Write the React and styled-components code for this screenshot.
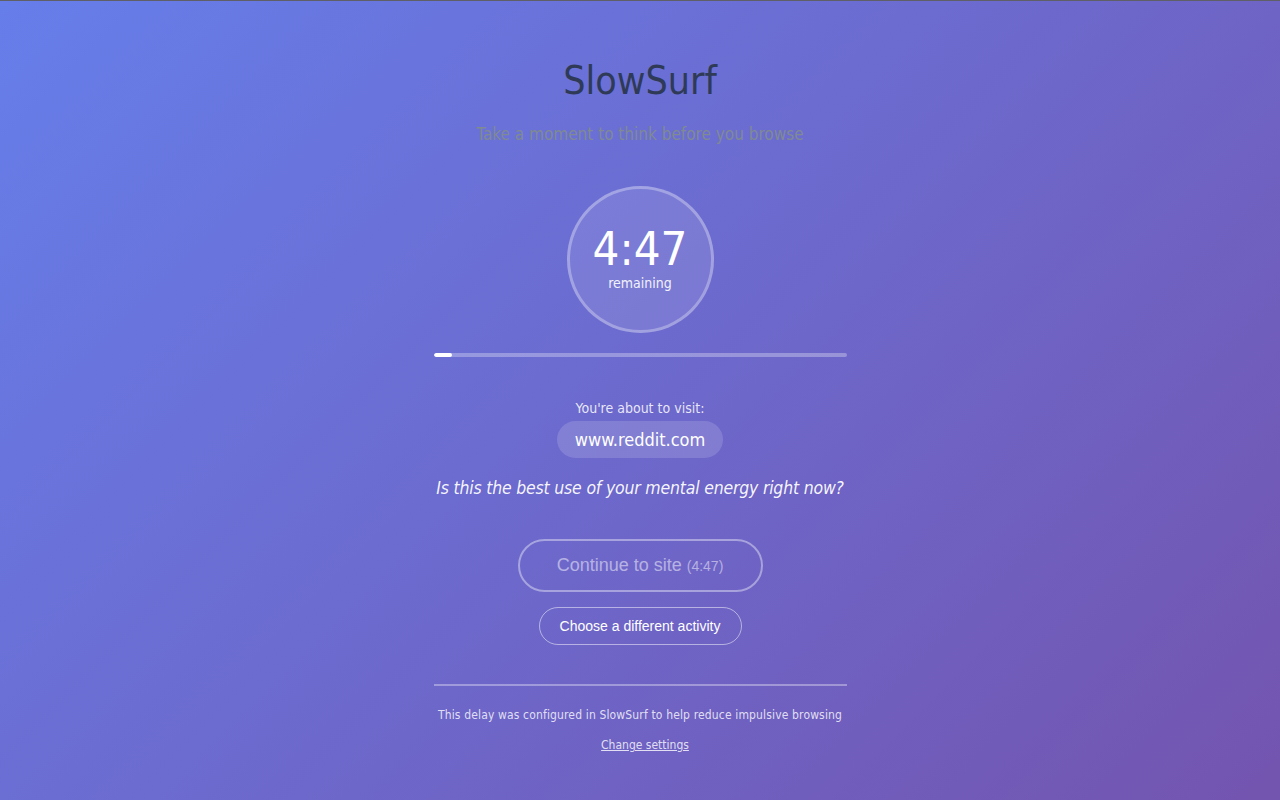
import React from 'react';
import styled, { createGlobalStyle } from 'styled-components';

const GlobalStyle = createGlobalStyle`
  html, body {
    margin: 0;
    padding: 0;
    height: 100%;
  }
  body {
    font-family: "DejaVu Sans Condensed", "DejaVu Sans", sans-serif;
  }
`;

const Page = styled.div`
  min-height: 800px;
  box-sizing: border-box;
  border-top: 1px solid #5f5f68;
  background: linear-gradient(135deg, #667eea 0%, #764ba2 122%);
  display: flex;
  justify-content: center;
`;

const Container = styled.div`
  width: 413px;
  display: flex;
  flex-direction: column;
  align-items: center;
  padding-top: 56px;
`;

const Title = styled.h1`
  margin: 0;
  font-size: 39px;
  font-weight: normal;
  color: #2e3a56;
  line-height: 48px;
`;

const Subtitle = styled.p`
  margin: 19px 0 0;
  font-size: 17px;
  color: #7f8a93;
  line-height: 20px;
`;

const Circle = styled.div`
  margin-top: 42px;
  width: 141px;
  height: 141px;
  border-radius: 50%;
  border: 3px solid rgba(255, 255, 255, 0.3);
  background: rgba(255, 255, 255, 0.1);
  display: flex;
  flex-direction: column;
  align-items: center;
  justify-content: center;
  color: #fff;
`;

const Time = styled.div`
  font-size: 47px;
  line-height: 50px;
`;

const Remaining = styled.div`
  font-size: 14px;
  line-height: 16px;
  margin-top: 1px;
  margin-bottom: 4px;
  opacity: 0.9;
`;

const Track = styled.div`
  margin-top: 20px;
  width: 100%;
  height: 4px;
  border-radius: 2px;
  background: rgba(255, 255, 255, 0.3);
  overflow: hidden;
`;

const Fill = styled.div`
  height: 100%;
  background: #fff;
  border-radius: 2px;
`;

const VisitLabel = styled.p`
  margin: 42px 0 0;
  font-size: 14px;
  line-height: 18px;
  color: rgba(255, 255, 255, 0.85);
`;

const UrlPill = styled.div`
  margin-top: 4px;
  padding: 0 18px;
  height: 37px;
  line-height: 37px;
  border-radius: 19px;
  background: rgba(255, 255, 255, 0.15);
  color: #fff;
  font-size: 18px;
`;

const Question = styled.p`
  margin: 19px 0 0;
  font-size: 17.5px;
  letter-spacing: -0.2px;
  line-height: 22px;
  white-space: nowrap;
  font-style: italic;
  color: rgba(255, 255, 255, 0.95);
`;

const PillButton = styled.button`
  font-family: "Liberation Sans", Arial, sans-serif;
  background: transparent;
  cursor: pointer;
  box-sizing: border-box;
  border-style: solid;
  border-width: ${p => (p.$primary ? '2px' : '1px')};
  border-color: ${p => (p.$primary ? 'rgba(255,255,255,0.4)' : 'rgba(255,255,255,0.5)')};
  border-radius: 30px;
  color: ${p => (p.$primary ? 'rgba(255,255,255,0.5)' : '#fff')};
  font-size: ${p => (p.$primary ? '18px' : '14px')};
  width: ${p => (p.$primary ? '245px' : '203px')};
  height: ${p => (p.$primary ? '53px' : '38px')};
  margin-top: ${p => (p.$primary ? '40px' : '15px')};
  padding: 0;
`;

const Small = styled.span`
  font-size: 14px;
`;

const Divider = styled.hr`
  margin: 39px 0 0;
  width: 100%;
  border: none;
  height: 2px;
  background: rgba(255, 255, 255, 0.35);
`;

const Footer = styled.p`
  margin: 21px 0 0;
  font-size: 12px;
  letter-spacing: 0.15px;
  line-height: 16px;
  white-space: nowrap;
  color: rgba(255, 255, 255, 0.8);
`;

const SettingsLink = styled.a`
  margin-top: 14px;
  margin-left: 10px;
  font-size: 12px;
  line-height: 16px;
  color: rgba(255, 255, 255, 0.8);
  text-decoration: underline;
  cursor: pointer;
`;

export default function App() {
  const progress = 4.4;
  return (
    <>
      <GlobalStyle />
      <Page>
        <Container>
          <Title>SlowSurf</Title>
          <Subtitle>Take a moment to think before you browse</Subtitle>
          <Circle>
            <Time>4:47</Time>
            <Remaining>remaining</Remaining>
          </Circle>
          <Track>
            <Fill style={{ width: `${progress}%` }} />
          </Track>
          <VisitLabel>You're about to visit:</VisitLabel>
          <UrlPill>www.reddit.com</UrlPill>
          <Question>Is this the best use of your mental energy right now?</Question>
          <PillButton $primary disabled>
            Continue to site <Small>(4:47)</Small>
          </PillButton>
          <PillButton>Choose a different activity</PillButton>
          <Divider />
          <Footer>This delay was configured in SlowSurf to help reduce impulsive browsing</Footer>
          <SettingsLink>Change settings</SettingsLink>
        </Container>
      </Page>
    </>
  );
}
